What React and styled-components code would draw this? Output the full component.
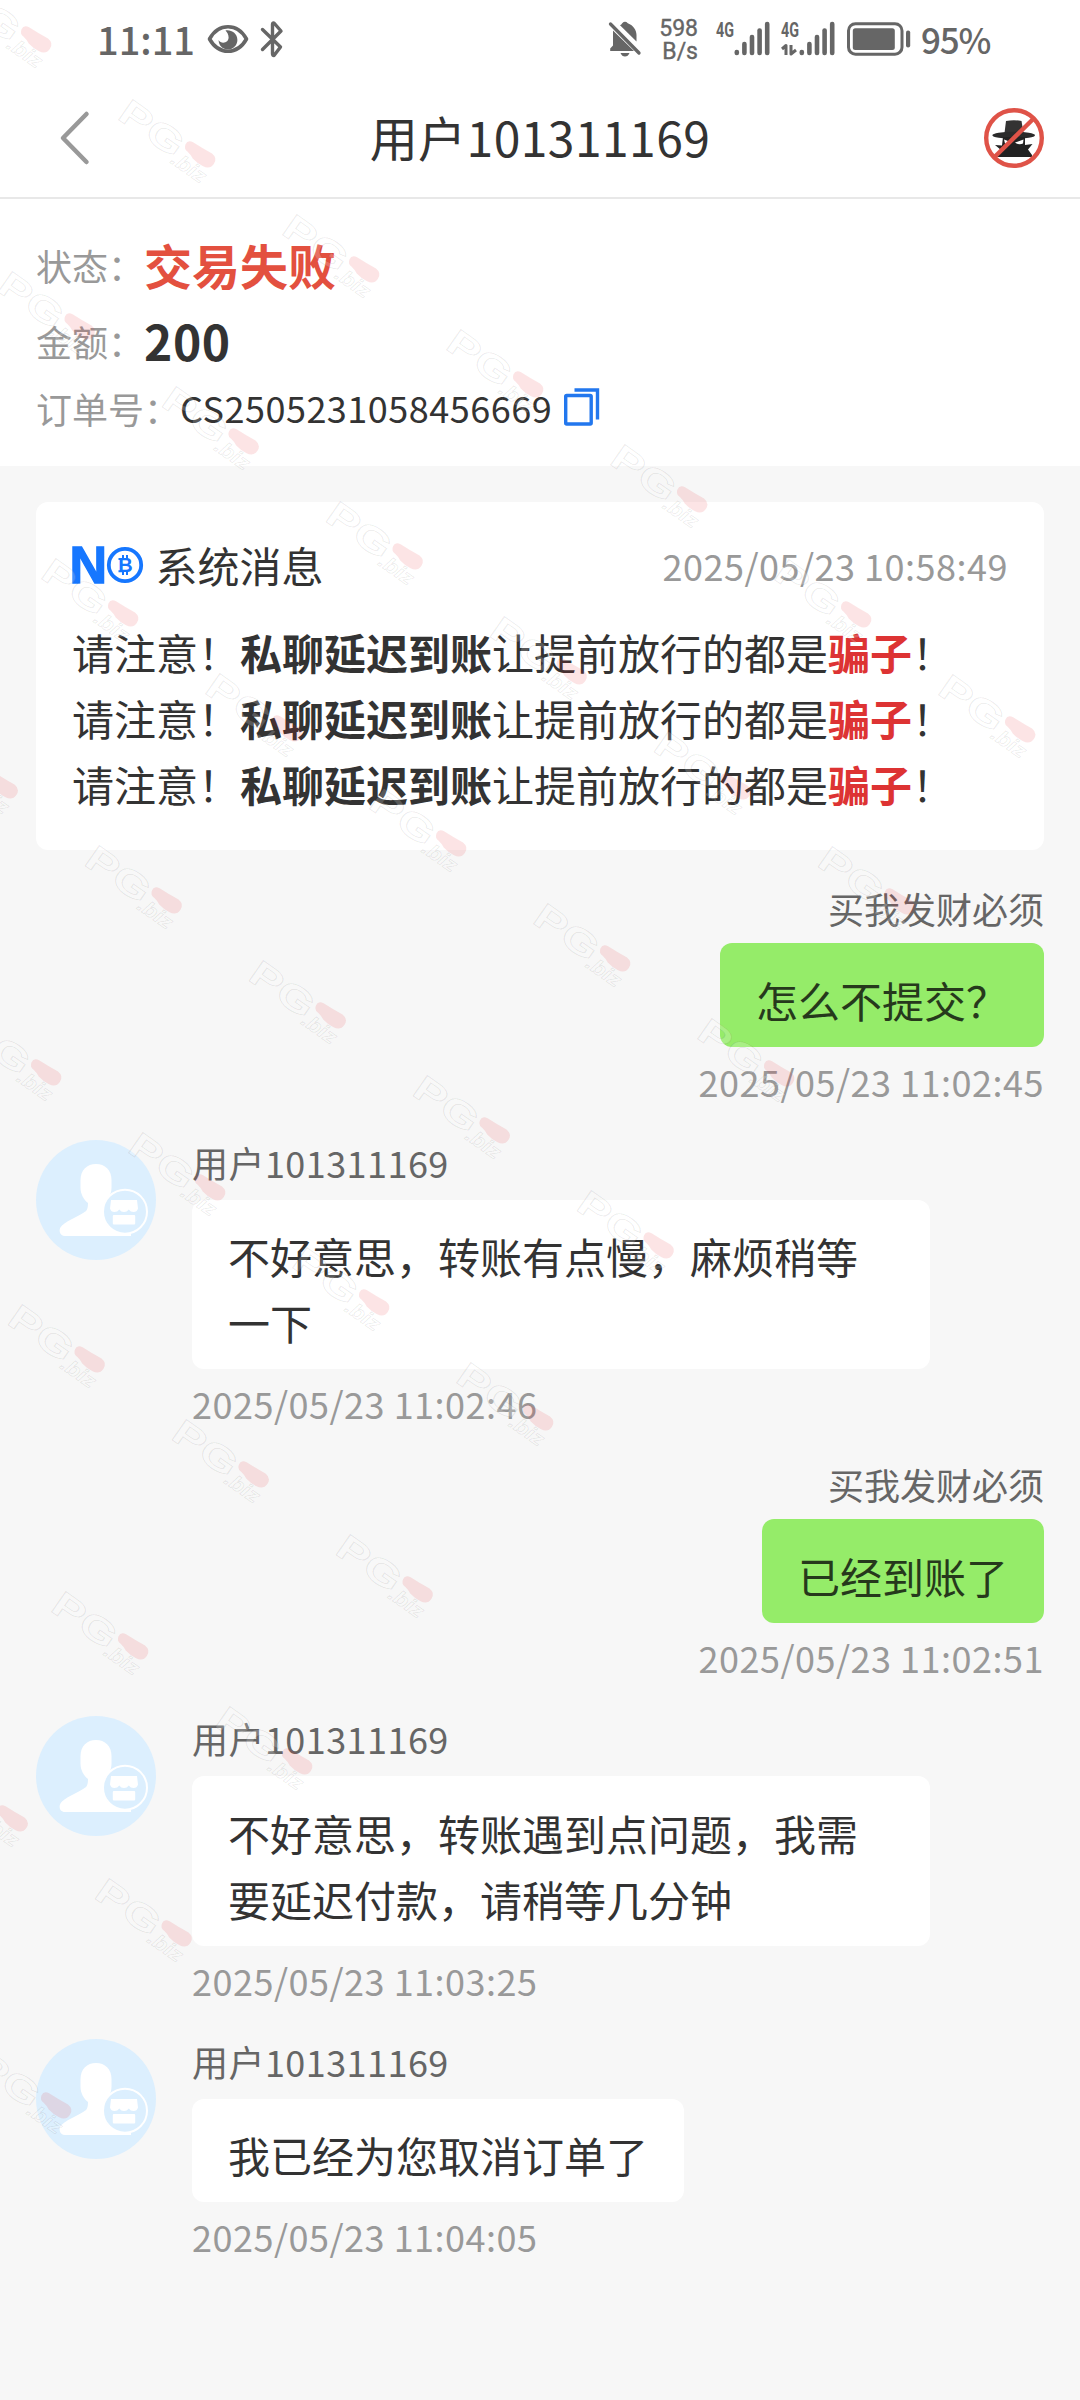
import styled, { createGlobalStyle, css } from 'styled-components'

const GlobalStyle = createGlobalStyle`
    * {
        box-sizing: border-box;
    }
    body {
        margin: 0;
        background: #f7f7f7;
        font-family: "Noto Sans CJK SC", "Noto Sans", sans-serif;
        color: #333;
    }
    svg {
        flex-shrink: 0;
        overflow: visible;
    }
`

const Page = styled.div`
    position: relative;
    width: 1080px;
    height: 2400px;
    overflow: hidden;
    background: #f7f7f7;
`

const StatusBar = styled.div`
    display: flex;
    align-items: center;
    justify-content: space-between;
    height: 78px;
    padding: 0 89px 0 97px;
    background: #fff;
    color: #666;
    font-weight: 500;
`

const StatusGroup = styled.div`
    display: flex;
    align-items: center;
`

const Clock = styled.span`
    font-size: 38px;
    line-height: 78px;
    margin-right: 14px;
    width: 96px;
`

const NetSpeed = styled.div`
    display: flex;
    flex-direction: column;
    align-items: flex-end;
    width: 44px;
    margin: 0 18px 0 13px;
    font-family: Roboto, sans-serif;
    font-size: 23px;
    font-weight: 400;
    line-height: 23px;
    padding-top: 1px;
    -webkit-text-stroke: 0.4px #666;
`

const BatteryText = styled.span`
    width: 70px;
    margin-left: 10px;
    font-size: 35px;
    line-height: 78px;
    letter-spacing: -1.2px;
`

const NavBar = styled.div`
    display: flex;
    align-items: center;
    justify-content: space-between;
    height: 121px;
    padding: 0 36px 0 56px;
    background: #fff;
    border-bottom: 2px solid #e8e8e8;
`

const NavSide = styled.div`
    display: flex;
    width: 64px;
    justify-content: ${({ $end }) => ($end ? 'flex-end' : 'flex-start')};
`

const NavTitle = styled.h1`
    margin: 0 0 4px;
    padding-right: 20px;
    font-size: 48px;
    font-weight: 400;
    line-height: 72px;
    letter-spacing: 0.45px;
`

const OrderInfo = styled.div`
    height: 267px;
    padding: 27px 36px 29px;
    background: #fff;
`

const InfoRow = styled.div`
    display: flex;
    align-items: center;
    height: ${({ $height }) => $height}px;
    font-size: 36px;
`

const InfoLabel = styled.span`
    padding-top: 2px;
    color: #999;
`

const InfoValue = styled.span`
    color: ${({ $failed }) => ($failed ? '#e3503f' : '#333')};
    ${({ $strong }) => $strong && css`
        font-size: 48px;
        font-weight: 700;
        line-height: 70px;
    `}
    ${({ $amount }) => $amount && css`
        letter-spacing: 0.6px;
    `}
`

const OrderNumber = styled.span`
    width: 384px;
    letter-spacing: 0.5px;
`

const SystemCard = styled.div`
    height: 348px;
    margin: 36px 36px 0;
    padding: 36px 36px 34px;
    background: #fff;
    border-radius: 12px;
`

const CardHead = styled.div`
    display: flex;
    align-items: center;
    height: 53px;
    margin-bottom: 27.5px;
`

const CardTitle = styled.span`
    flex: 1;
    margin-left: 11.5px;
    font-size: 42px;
    line-height: 50px;
`

const CardTime = styled.span`
    padding-top: 1px;
    font-size: 36px;
    color: #999;
    letter-spacing: 0.5px;
`

const WarningLine = styled.p`
    margin: 0;
    font-size: 42px;
    line-height: 66px;
    white-space: nowrap;
`

const Danger = styled.b`
    color: #dd3333;
`

const MessageRow = styled.div`
    display: flex;
    padding: 0 36px;
    justify-content: ${({ $mine }) => ($mine ? 'flex-end' : 'flex-start')};
`

const MessageBody = styled.div`
    display: flex;
    flex-direction: column;
    align-items: ${({ $mine }) => ($mine ? 'flex-end' : 'flex-start')};
    width: 738px;
    margin-left: 36px;
`

const Sender = styled.div`
    height: ${({ $mine }) => ($mine ? 57 : 60)}px;
    font-size: 36px;
    line-height: 44px;
    letter-spacing: ${({ $mine }) => ($mine ? 0 : 0.45)}px;
    color: #666;
`

const Bubble = styled.div`
    padding: 23.5px 36px 14.2px;
    max-width: 738px;
    background: ${({ $mine }) => ($mine ? '#95ec69' : '#fff')};
    color: ${({ $mine }) => ($mine ? '#26391c' : '#333')};
    border-radius: 12px;
    font-size: 42px;
    line-height: 66px;
`

const SentAt = styled.div`
    height: 93px;
    font-size: 36px;
    line-height: 69px;
    color: #999;
    letter-spacing: 0.5px;
`

const WatermarkLayer = styled.svg`
    position: absolute;
    inset: 0;
    pointer-events: none;
`

const EyeIcon = () => (
    <svg width="42" height="30" viewBox="0 0 42 30">
        <path d="M2.5 15C7 7 13.5 2.8 21 2.8S35 7 39.5 15C35 23 28.5 27.2 21 27.2S7 23 2.5 15Z" fill="none" stroke="#666" strokeWidth="3.6" strokeLinejoin="round" />
        <path d="M18.5 6.4C24 5.4 30.4 9 30.4 16c0 5-4 9.4-9.4 9.4-5.2 0-9.4-3.8-9.4-9.4 1 1.8 2.8 2.8 4.6 2.8 3.2 0 5.4-2.4 5.4-5.2 0-3-1.4-5.6-3.1-7.2Z" fill="#666" />
    </svg>
)

const BluetoothIcon = () => (
    <svg width="24" height="38" viewBox="0 0 24 38" fill="none" stroke="#666" strokeWidth="3.4" strokeLinejoin="round" strokeLinecap="round">
        <path d="M2.5 9.5 20.5 27 14 35.5Q12.5 35.5 12.5 33.5V4.5Q12.5 2.5 14 3L21 11 2.5 29.5" />
    </svg>
)

const BellOffIcon = () => (
    <svg width="32" height="36" viewBox="0 0 32 36">
        <path d="M4 9.5 25 30H1.2V27.5L4 24.5ZM11 4.2Q12.5 3.5 13.2 2.2Q16 -.5 18.8 2.2C24.5 4.5 27.5 9 27.5 14V20.5ZM11.5 32H20.5Q19 35.5 16 35.5T11.5 32Z" fill="#666" />
        <path d="M1.5 3 30 32" stroke="#666" strokeWidth="3.3" strokeLinecap="round" />
    </svg>
)

const SignalIcon = ({ traffic }) => (
    <svg width="54" height="36" viewBox="0 0 54 36">
        <text x="0" y="16" textLength="18" lengthAdjust="spacingAndGlyphs" fontFamily="Roboto, sans-serif" fontWeight="700" fontSize="20.5" fill="#666">4G</text>
        {traffic && (
            <path d="M1 28 5 24.5V34M10 24V33L15 29" fill="none" stroke="#666" strokeWidth="3" strokeLinejoin="round" />
        )}
        {[5.5, 13.5, 20.5, 27, 33.5].map((h, i) => (
            <rect key={h} x={18.5 + i * 7.6} y={34.2 - h} width="4.6" height={h} rx="2.2" fill="#666" />
        ))}
    </svg>
)

const BatteryIcon = () => (
    <svg width="64" height="34" viewBox="0 0 64 34">
        <rect x="1.5" y="1.7" width="53.5" height="30.5" rx="7" fill="none" stroke="#666" strokeWidth="3" />
        <rect x="5.8" y="6.2" width="42" height="21.8" rx="2.5" fill="#666" />
        <rect x="59" y="8.5" width="4.2" height="17" rx="2" fill="#666" />
    </svg>
)

const BackIcon = () => (
    <svg width="36" height="54" viewBox="0 0 36 54">
        <path d="M30.5 3 7 27 30.5 51" fill="none" stroke="#999" strokeWidth="4.5" strokeLinecap="round" strokeLinejoin="round" />
    </svg>
)

const NoScamIcon = () => (
    <svg width="60" height="60" viewBox="0 0 60 60">
        <path d="M22 13Q30 11.5 37.5 13L39.5 25Q30 28 20.5 25Z" fill="#333" />
        <ellipse cx="29.7" cy="27.3" rx="21.3" ry="3.6" fill="#2b2b2b" />
        <path d="M19 29H41V37L48.5 36 44 41.5 48 47V49H11.5L17 42 11 37 18 37.5Z" fill="#222" />
        <path d="M20 31.5 28 34.5Q25 37.5 21 35.5ZM39.5 31.5 31 34.5Q35 37.5 39 35.5Z" fill="#fff" />
        <path d="M49.7 10.5 10.3 49.3" stroke="#df5348" strokeWidth="4.4" />
        <circle cx="30" cy="30" r="27.8" fill="none" stroke="#df5348" strokeWidth="4.4" />
    </svg>
)

const CopyIcon = () => (
    <svg width="36" height="38" viewBox="0 0 36 38" fill="none" stroke="#2277ee" strokeWidth="3.4">
        <rect x="1.7" y="7.5" width="25.5" height="28.5" rx="1" />
        <path d="M10.5 2H33.5V31.5" />
    </svg>
)

const NoLogo = () => (
    <svg width="72" height="36" viewBox="0 1 72 36">
        <text x="-2.5" y="37" fontFamily="Liberation Sans, sans-serif" fontWeight="700" fontSize="52" fill="#1677ff" stroke="#1677ff" strokeWidth="1.4">N</text>
        <circle cx="53" cy="19" r="16.2" fill="#fff" stroke="#1677ff" strokeWidth="3.8" />
        <text x="53.5" y="26.2" textAnchor="middle" fontFamily="Liberation Sans, sans-serif" fontWeight="700" fontSize="20" fill="#1677ff">B</text>
        <path d="M51 9V13M55 9V13M51 25.5V29M55 25.5V29M46.5 13H50M46.5 25.2H50" stroke="#1677ff" strokeWidth="2" />
    </svg>
)

const AvatarIcon = () => (
    <svg width="120" height="120" viewBox="0 0 120 120">
        <circle cx="60" cy="60" r="60" fill="#dceffe" />
        <path d="M60 24C69 24 75.5 30 75.5 40V48C75.5 54 72 60 68 63V69L95 84V96H29C23 96 22 89 26 85.5C32 80 44 76 50 71Q52 69 52 63C48 60 44.5 54 44.5 48V40C44.5 30 51 24 60 24Z" fill="#fff" />
        <circle cx="89" cy="71.7" r="22" fill="#dceffe" stroke="#fff" strokeWidth="2" />
        <path d="M75 60H101L102 68.5Q101 72 97.5 72 94.5 72 92.8 69.5 91 72 88 72 85 72 83.3 69.5 81.5 72 78.5 72 75 72 74 68.5Z" fill="#fff" />
        <rect x="76.8" y="75" width="22.4" height="9.5" rx="1" fill="#fff" />
    </svg>
)

// grid of diagonal marks, one [row, first, last] entry for each diagonal
const markRows = [
    [-3, -3, 3],
    [-2, -2, 3],
    [-1, -2, 3],
    [0, -1, 3],
    [1, 0, 3],
    [2, 1, 3],
    [3, 1, 3],
    [4, 2, 3],
    [5, 3, 3],
]

const marks = markRows.flatMap(([row, first, last]) => {
    const list = []
    for (let i = first; i <= last; i++) {
        list.push({ x: 166 + 164 * i - 120.5 * row, y: 900 + 115 * i + 172 * row })
    }
    return list
})

const Watermark = () => (
    <WatermarkLayer width="1080" height="2400">
        {marks.map(({ x, y }) => (
            <g key={`${x}-${y}`} transform={`translate(${x} ${y}) rotate(35)`}>
                <g fontFamily="Liberation Sans, sans-serif" fontWeight="700" fill="#fff" fillOpacity="0.2" stroke="#000" strokeOpacity="0.08">
                    <text x="-89" y="18.5" fontSize="36" textLength="71" lengthAdjust="spacingAndGlyphs">PG</text>
                    <text x="-20" y="24" fontSize="20" fontStyle="italic" strokeWidth="0.9" textLength="38" lengthAdjust="spacingAndGlyphs">.biz</text>
                </g>
                <path d="M-12-6Q-18-5-17 0T-11 5Q-7 5.500-3 7.500Q4 9 10 8Q17.500 7 17.500 0T10-7.500Q0-6.500-12-6Z" fill="#e8202c" fillOpacity="0.12" />
            </g>
        ))}
    </WatermarkLayer>
)

const messages = [
    { id: 1, mine: true, name: '买我发财必须', text: '怎么不提交？', time: '2025/05/23 11:02:45' },
    { id: 2, name: '用户101311169', text: '不好意思，转账有点慢，麻烦稍等一下', time: '2025/05/23 11:02:46' },
    { id: 3, mine: true, name: '买我发财必须', text: '已经到账了', time: '2025/05/23 11:02:51' },
    { id: 4, name: '用户101311169', text: '不好意思，转账遇到点问题，我需要延迟付款，请稍等几分钟', time: '2025/05/23 11:03:25' },
    { id: 5, name: '用户101311169', text: '我已经为您取消订单了', time: '2025/05/23 11:04:05' },
]

const MessageList = styled.div`
    display: flex;
    flex-direction: column;
    padding-top: 36px;
`

const Message = ({ mine, name, text, time }) => (
    <MessageRow $mine={mine}>
        {!mine && <AvatarIcon />}
        <MessageBody $mine={mine}>
            <Sender $mine={mine}>{name}</Sender>
            <Bubble $mine={mine}>{text}</Bubble>
            <SentAt>{time}</SentAt>
        </MessageBody>
    </MessageRow>
)

const StatusIcons = styled(StatusGroup)`
    gap: 11px;
`

const Signals = styled(StatusGroup)`
    gap: 11px;
    margin-right: 12px;
`

const App = () => (
    <Page lang="zh-CN">
        <GlobalStyle />
        <StatusBar>
            <StatusGroup>
                <Clock>11:11</Clock>
                <StatusIcons>
                    <EyeIcon />
                    <BluetoothIcon />
                </StatusIcons>
            </StatusGroup>
            <StatusGroup>
                <BellOffIcon />
                <NetSpeed>
                    <span>598</span>
                    <span>B/s</span>
                </NetSpeed>
                <Signals>
                    <SignalIcon />
                    <SignalIcon traffic />
                </Signals>
                <BatteryIcon />
                <BatteryText>95%</BatteryText>
            </StatusGroup>
        </StatusBar>
        <NavBar>
            <NavSide>
                <BackIcon />
            </NavSide>
            <NavTitle>用户101311169</NavTitle>
            <NavSide $end>
                <NoScamIcon />
            </NavSide>
        </NavBar>
        <OrderInfo>
            <InfoRow $height={76}>
                <InfoLabel>状态：</InfoLabel>
                <InfoValue $strong $failed>交易失败</InfoValue>
            </InfoRow>
            <InfoRow $height={75}>
                <InfoLabel>金额：</InfoLabel>
                <InfoValue $strong $amount>200</InfoValue>
            </InfoRow>
            <InfoRow $height={60}>
                <InfoLabel>订单号：</InfoLabel>
                <OrderNumber>CS2505231058456669</OrderNumber>
                <CopyIcon />
            </InfoRow>
        </OrderInfo>
        <SystemCard>
            <CardHead>
                <NoLogo />
                <CardTitle>系统消息</CardTitle>
                <CardTime>2025/05/23 10:58:49</CardTime>
            </CardHead>
            {[1, 2, 3].map(n => (
                <WarningLine key={n}>
                    请注意！<b>私聊延迟到账</b>让提前放行的都是<Danger>骗子</Danger>！
                </WarningLine>
            ))}
        </SystemCard>
        <MessageList>
            {messages.map(message => (
                <Message key={message.id} {...message} />
            ))}
        </MessageList>
        <Watermark />
    </Page>
)

export default App
